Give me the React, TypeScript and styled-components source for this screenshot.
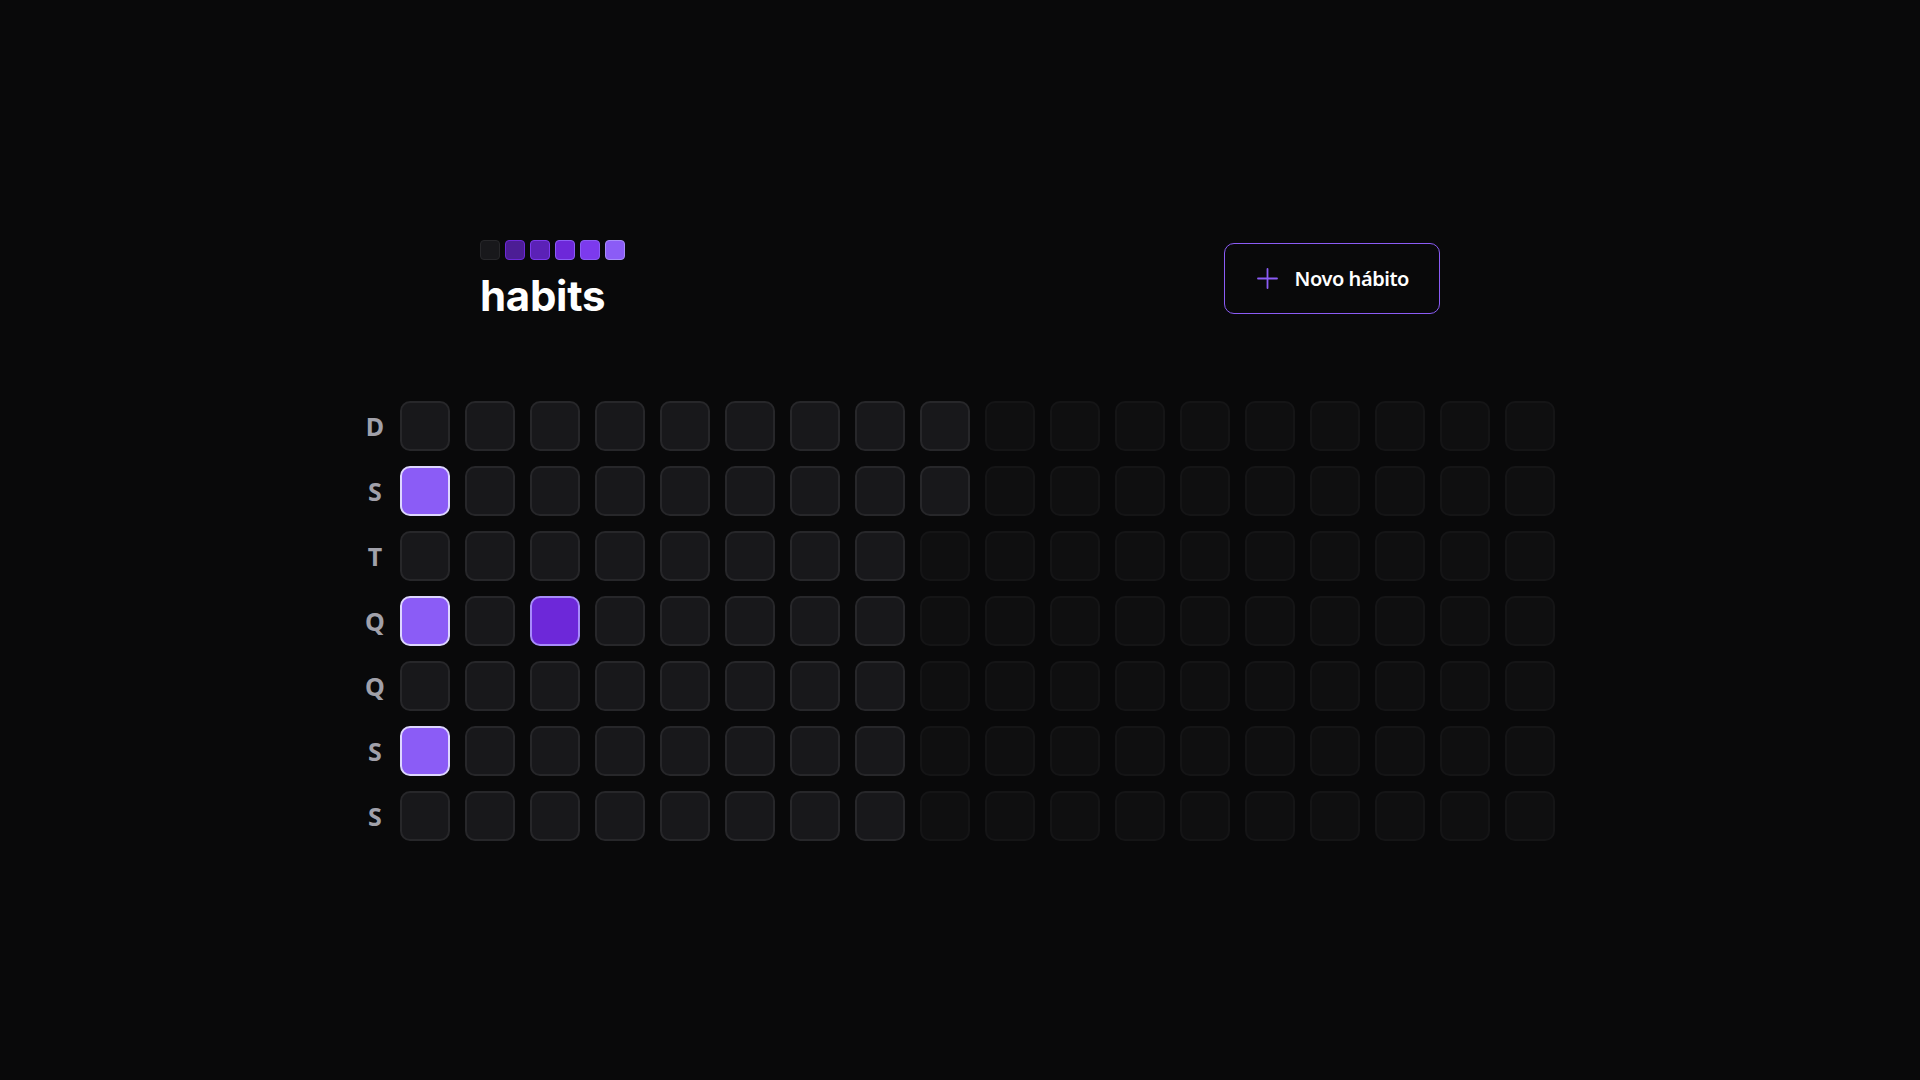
import React from "react";
import styled, { createGlobalStyle } from "styled-components";

const GlobalStyle = createGlobalStyle`
  html, body {
    margin: 0;
    padding: 0;
    background: #09090a;
    color: #ffffff;
    font-family: "Noto Sans", "Open Sans", sans-serif;
  }
  * { box-sizing: border-box; }
`;

const Page = styled.div`
  width: 100%;
  min-height: 100vh;
  display: flex;
  align-items: center;
  justify-content: center;
`;

const Container = styled.div`
  width: 100%;
  max-width: 1280px;
  padding: 0 30px;
  display: flex;
  flex-direction: column;
  gap: 84px;
`;

const Header = styled.header`
  width: 100%;
  max-width: 960px;
  margin: 0 auto;
  display: flex;
  align-items: center;
  justify-content: space-between;
`;

const Logo = styled.div`
  display: flex;
  flex-direction: column;
  gap: 15px;
`;

const LogoSquares = styled.div`
  display: flex;
  gap: 5px;
`;

const LogoSquare = styled.div<{ $bg: string; $border: string }>`
  width: 20px;
  height: 20px;
  border-radius: 4px;
  background: ${(p) => p.$bg};
  border: 1px solid ${(p) => p.$border};
`;

const LogoText = styled.div`
  font-family: Inter, "Noto Sans", sans-serif;
  font-weight: 700;
  font-size: 42px;
  line-height: 1;
  letter-spacing: -0.3px;
  color: #ffffff;
`;

const NewButton = styled.button`
  display: flex;
  align-items: center;
  gap: 15px;
  padding: 20px 30px;
  border: 1px solid #8b5cf6;
  border-radius: 10px;
  background: transparent;
  color: #ffffff;
  font-family: "Noto Sans", "Open Sans", sans-serif;
  font-weight: 600;
  font-size: 20px;
  line-height: 29px;
  letter-spacing: -0.45px;
  cursor: pointer;
`;

const Table = styled.div`
  display: flex;
`;

const WeekDays = styled.div`
  display: grid;
  grid-template-rows: repeat(7, 50px);
  gap: 15px;
`;

const WeekDay = styled.div`
  width: 50px;
  height: 50px;
  display: flex;
  align-items: center;
  justify-content: center;
  color: #a1a1aa;
  font-size: 25px;
  font-weight: 700;
`;

const Days = styled.div`
  display: grid;
  grid-template-rows: repeat(7, 50px);
  grid-auto-flow: column;
  grid-auto-columns: 50px;
  gap: 15px;
`;

type Level = "empty" | "placeholder" | "mid" | "full";

const levelStyles: Record<Level, { bg: string; border: string; opacity: number }> = {
  empty: { bg: "#18181b", border: "#27272a", opacity: 1 },
  placeholder: { bg: "#18181b", border: "#27272a", opacity: 0.4 },
  mid: { bg: "#6d28d9", border: "#a78bfa", opacity: 1 },
  full: { bg: "#8b5cf6", border: "#ddd6fe", opacity: 1 },
};

const Day = styled.div<{ $level: Level }>`
  width: 50px;
  height: 50px;
  border-radius: 10px;
  border: 2px solid ${(p) => levelStyles[p.$level].border};
  background: ${(p) => levelStyles[p.$level].bg};
  opacity: ${(p) => levelStyles[p.$level].opacity};
`;

const logoColors = [
  { bg: "#18181b", border: "#27272a" },
  { bg: "#4c1d95", border: "#6d28d9" },
  { bg: "#5b21b6", border: "#7c3aed" },
  { bg: "#6d28d9", border: "#8b5cf6" },
  { bg: "#7c3aed", border: "#8b5cf6" },
  { bg: "#8b5cf6", border: "#a78bfa" },
];

const weekDays = ["D", "S", "T", "Q", "Q", "S", "S"];
const TOTAL = 18 * 7;
const PAST_DAYS = 58;
const completion: Record<number, Level> = { 1: "full", 3: "full", 5: "full", 17: "mid" };

const PlusIcon = () => (
  <svg width="25" height="25" viewBox="0 0 25 25" fill="none">
    <path d="M3 12.5H22M12.5 3V22" stroke="#8b5cf6" strokeWidth="1.8" strokeLinecap="round" />
  </svg>
);

export default function App() {
  const cells: Level[] = Array.from({ length: TOTAL }, (_, i) =>
    i < PAST_DAYS ? completion[i] ?? "empty" : "placeholder"
  );
  return (
    <>
      <GlobalStyle />
      <Page>
        <Container>
          <Header>
            <Logo>
              <LogoSquares>
                {logoColors.map((c, i) => (
                  <LogoSquare key={i} $bg={c.bg} $border={c.border} />
                ))}
              </LogoSquares>
              <LogoText>habits</LogoText>
            </Logo>
            <NewButton>
              <PlusIcon />
              Novo hábito
            </NewButton>
          </Header>
          <Table>
            <WeekDays>
              {weekDays.map((d, i) => (
                <WeekDay key={i}>{d}</WeekDay>
              ))}
            </WeekDays>
            <Days>
              {cells.map((lvl, i) => (
                <Day key={i} $level={lvl} />
              ))}
            </Days>
          </Table>
        </Container>
      </Page>
    </>
  );
}
